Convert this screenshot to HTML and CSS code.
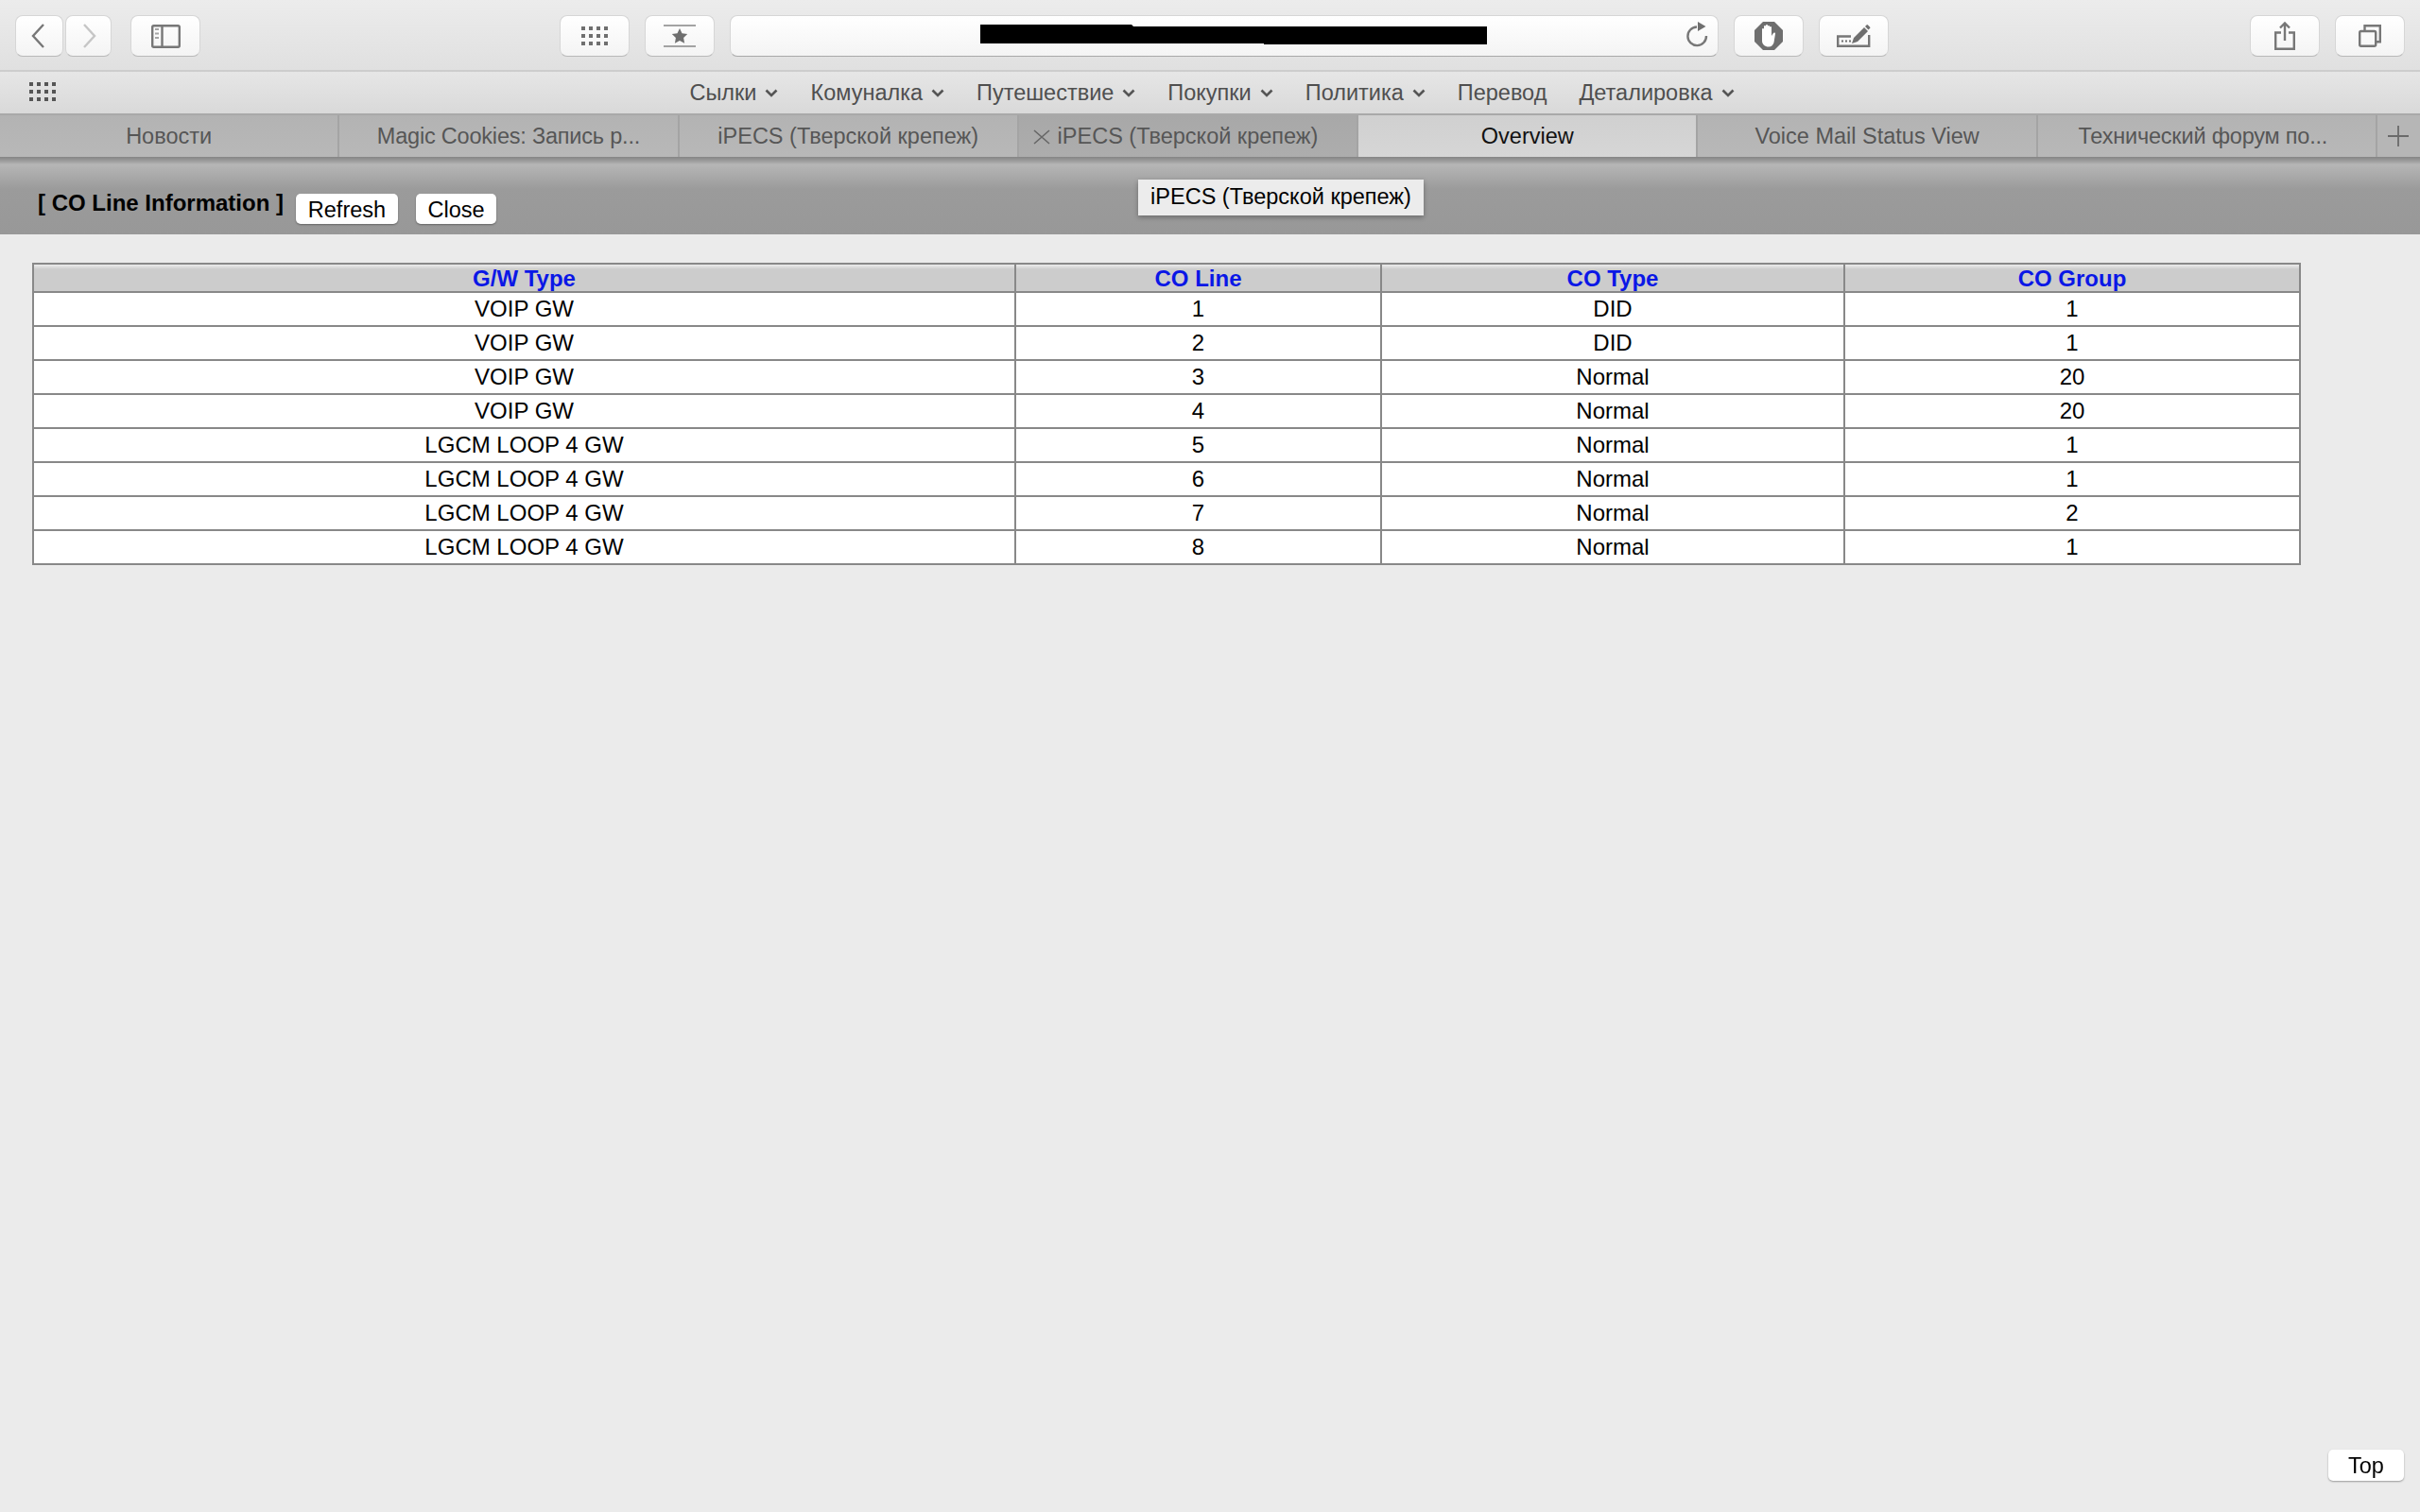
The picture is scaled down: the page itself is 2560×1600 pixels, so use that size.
FILE: index.html
```html
<!DOCTYPE html>
<html lang="ru">
<head>
<meta charset="utf-8">
<title>CO Line Information</title>
<link rel="stylesheet" href="styles.css">
</head>
<body>
<header class="toolbar">
  <button class="tb tb-back"><svg width="14" height="26" viewBox="0 0 14 26"><path class="ic" d="M13 1 2 13l11 12"/></svg></button>
  <button class="tb tb-fwd"><svg width="14" height="26" viewBox="0 0 14 26"><path class="ic-off" d="M1 1l11 12L1 25"/></svg></button>
  <button class="tb tb-wide tb-side"><svg width="31" height="25" viewBox="0 0 31 25"><rect class="ic" x="1.2" y="1.2" width="28.6" height="22.6" rx="1.5"/><path class="ic" d="M11.5 1v23"/><path class="ic-thin" d="M4 5h4M4 9.500h4M4 14h4"/></svg></button>
  <button class="tb tb-wide tb-grid"><svg width="28" height="20" viewBox="0 0 28 20"><path class="dots" d="M0 0h4v4H0zM8 0h4v4H8zM16 0h4v4h-4zM24 0h4v4h-4zM0 8h4v4H0zM8 8h4v4H8zM16 8h4v4h-4zM24 8h4v4h-4zM0 16h4v4H0zM8 16h4v4H8zM16 16h4v4h-4zM24 16h4v4h-4z"/></svg></button>
  <button class="tb tb-wide tb-star"><svg width="34" height="24" viewBox="0 0 34 24"><path class="ic-line" d="M0 1h34M0 23h34"/><path class="dots" d="M17 4l2.500 5.200 5.700.8-4.100 4 1 5.700-5.100-2.700-5.100 2.700 1-5.700-4.100-4 5.700-.8z"/></svg></button>
  <div class="address">
    <svg class="redact" width="536" height="22" viewBox="0 0 536 22"><path d="M0 0h160l2 2h374v19H300v-1H0z"/></svg>
    <svg class="reload" width="26" height="27" viewBox="0 0 26 27"><path class="ic" d="M12 5.500A9.800 9.800 0 1 0 22 15"/><path class="dots" d="M13 0l8.500 5L13 10z"/></svg>
  </div>
  <button class="tb tb-wide tb-hand"><svg width="30" height="30" viewBox="0 0 30 30"><path class="dots" d="M9 0h12l9 9v12l-9 9H9l-9-9V9z"/><path class="palm" d="M8 15V8a1 1 0 0 1 2 0V5a1 1 0 0 1 2 0V4a1 1 0 0 1 2 0v1a1 1 0 0 1 2 0v1a1 1 0 0 1 2 0V15l2-3c.8-1.200 2.500-.4 2 .8L20.500 22c-.8 2.500-2.500 4.500-5.500 4.500-4 0-7-2.500-7-6.500z"/></svg></button>
  <button class="tb tb-wide tb-pen"><svg width="36" height="24" viewBox="0 0 36 24"><path class="ic" d="M15 12.500H1.200v10.300h33V11"/><path class="dots" d="M5 16.500h2v2H5zM9 16.500h2v2H9zM13 16.500h2v2h-2zM16 20l2-6L29 3l4 4-11 11zM30 2l1.500-1.500a1 1 0 0 1 1.500 0l2 2a1 1 0 0 1 0 1.500L33.500 5.500z"/></svg></button>
  <button class="tb tb-wide tb-share"><svg width="22" height="30" viewBox="0 0 22 30"><path class="ic" d="M7 11.500H1.200v17.300h19.600V11.500H15M11 1.500V20M6 6.500l5-5 5 5"/></svg></button>
  <button class="tb tb-wide tb-tabs"><svg width="24" height="24" viewBox="0 0 24 24"><rect class="ic" x="1.200" y="7" width="17" height="15.800" rx="1.500"/><path class="ic" d="M6.500 6V1.200h16.300v17h-4"/></svg></button>
</header>

<nav class="bookmarks">
  <svg class="apps" width="28" height="20" viewBox="0 0 28 20"><path class="apps-dots" d="M0 0h4v4H0zM8 0h4v4H8zM16 0h4v4h-4zM24 0h4v4h-4zM0 8h4v4H0zM8 8h4v4H8zM16 8h4v4h-4zM24 8h4v4h-4zM0 16h4v4H0zM8 16h4v4H8zM16 16h4v4h-4zM24 16h4v4h-4z"/></svg>
  <span class="bm">Сылки<svg class="chev" width="14" height="9" viewBox="0 0 14 9"><path d="M1.500 1.500 7 7l5.500-5.500"/></svg></span>
  <span class="bm">Комуналка<svg class="chev" width="14" height="9" viewBox="0 0 14 9"><path d="M1.500 1.500 7 7l5.500-5.500"/></svg></span>
  <span class="bm">Путешествие<svg class="chev" width="14" height="9" viewBox="0 0 14 9"><path d="M1.500 1.500 7 7l5.500-5.500"/></svg></span>
  <span class="bm">Покупки<svg class="chev" width="14" height="9" viewBox="0 0 14 9"><path d="M1.500 1.500 7 7l5.500-5.500"/></svg></span>
  <span class="bm">Политика<svg class="chev" width="14" height="9" viewBox="0 0 14 9"><path d="M1.500 1.500 7 7l5.500-5.500"/></svg></span>
  <span class="bm">Перевод</span>
  <span class="bm">Деталировка<svg class="chev" width="14" height="9" viewBox="0 0 14 9"><path d="M1.500 1.500 7 7l5.500-5.500"/></svg></span>
</nav>

<div class="tabs">
  <div class="tab">Новости</div>
  <div class="tab tab-cut">Magic Cookies: Запись р...</div>
  <div class="tab">iPECS (Тверской крепеж)</div>
  <div class="tab tab-hover"><svg class="tab-x" width="18" height="16" viewBox="0 0 18 16"><path d="M1 1l16 14M17 1 1 15"/></svg>iPECS (Тверской крепеж)</div>
  <div class="tab tab-active">Overview</div>
  <div class="tab">Voice Mail Status View</div>
  <div class="tab tab-cut tab-forum">Технический форум по...</div>
  <div class="tab-add"><svg width="22" height="22" viewBox="0 0 22 22"><path d="M11 0v22M0 11h22"/></svg></div>
</div>

<section class="pagehead">
  <h1 class="pagetitle">[ CO Line Information ]</h1>
  <button class="btn btn-refresh">Refresh</button>
  <button class="btn btn-close">Close</button>
  <div class="tooltip">iPECS (Тверской крепеж)</div>
</section>

<main class="content">
  <table class="grid">
    <colgroup><col class="c1"><col class="c2"><col class="c3"><col class="c4"></colgroup>
    <thead><tr><th>G/W Type</th><th>CO Line</th><th>CO Type</th><th>CO Group</th></tr></thead>
    <tbody>
      <tr><td>VOIP GW</td><td>1</td><td>DID</td><td>1</td></tr>
      <tr><td>VOIP GW</td><td>2</td><td>DID</td><td>1</td></tr>
      <tr><td>VOIP GW</td><td>3</td><td>Normal</td><td>20</td></tr>
      <tr><td>VOIP GW</td><td>4</td><td>Normal</td><td>20</td></tr>
      <tr><td>LGCM LOOP 4 GW</td><td>5</td><td>Normal</td><td>1</td></tr>
      <tr><td>LGCM LOOP 4 GW</td><td>6</td><td>Normal</td><td>1</td></tr>
      <tr><td>LGCM LOOP 4 GW</td><td>7</td><td>Normal</td><td>2</td></tr>
      <tr><td>LGCM LOOP 4 GW</td><td>8</td><td>Normal</td><td>1</td></tr>
    </tbody>
  </table>
</main>

<button class="btn btn-top">Top</button>
</body>
</html>
```

FILE: styles.css
```css
* { box-sizing: border-box; }
html, body { margin: 0; height: 100%; }
body {
  background: #ebebeb;
  font-family: "Liberation Sans", Arial, sans-serif;
  overflow: hidden;
  color: #000;
}
svg { display: block; }

/* toolbar */
.toolbar {
  height: 76px;
  padding: 16px 16px 0;
  display: flex;
  align-items: flex-start;
  background: linear-gradient(#ececec, #e0e0e0);
  border-bottom: 2px solid #cdcdcd;
}
.tb, .address {
  height: 44px;
  border: 1px solid #d6d6d6;
  border-bottom-color: #b9b9b9;
  border-radius: 8px;
  background: linear-gradient(#ffffff, #f4f4f4);
  padding: 0;
  display: flex;
  align-items: center;
  justify-content: center;
  flex: none;
}
.tb-back { width: 51px; margin-right: 2px; padding-right: 4px; }
.tb-fwd { width: 49px; padding-left: 3px; }
.tb-wide { width: 74px; }
.tb-side { margin-left: 20px; }
.tb-grid { margin-left: 380px; }
.tb-star { margin-left: 16px; }
.tb-hand { margin-left: 16px; }
.tb-pen { margin-left: 16px; }
.tb-share { margin-left: 382px; }
.tb-tabs { margin-left: 16px; }
.address {
  width: 1046px;
  margin-left: 16px;
  justify-content: flex-start;
  padding-left: 264px;
  padding-right: 8px;
  border-bottom-color: #a9a9a9;
}
.redact { fill: #000; margin-top: -3px; }
.reload { margin-left: auto; margin-top: -4px; }
.ic, .ic-off, .ic-thin, .ic-line { fill: none; stroke: #777; stroke-width: 2.4; }
.ic-off { stroke: #c6c6c6; }
.ic-thin { stroke: #a5a5a5; stroke-width: 2; }
.ic-line { stroke: #a3a3a3; stroke-width: 2; }
.dots { fill: #6f6f6f; }
.palm { fill: #fff; }

/* bookmarks */
.bookmarks {
  height: 46px;
  display: flex;
  align-items: center;
  justify-content: center;
  gap: 34px;
  position: relative;
  background: linear-gradient(#e6e6e6, #d9d9d9);
  border-bottom: 2px solid #a9a9a9;
  color: #4f4f4f;
  font-size: 23.5px;
  padding-left: 4px;
}
.apps { position: absolute; left: 31px; top: 11px; }
.apps-dots { fill: #555; }
.bm { display: flex; align-items: center; gap: 9px; line-height: 44px; }
.chev { fill: none; stroke: #555; stroke-width: 2.6; }

/* tabs */
.tabs {
  height: 44px;
  display: grid;
  grid-template-columns: repeat(7, minmax(0, 1fr)) 45px;
  background: #b6b6b6;
  color: #565656;
  font-size: 23.5px;
}
.tab {
  position: relative;
  display: flex;
  align-items: center;
  justify-content: center;
  border-right: 2px solid #a4a4a4;
  background: linear-gradient(#b3b3b3, #b8b8b8);
  white-space: nowrap;
}
.tab-cut { letter-spacing: -.2px; }
.tab-forum { padding-right: 8px; }
.tab-hover { background: linear-gradient(#a8a8a8, #adadad); }
.tab-active {
  background: linear-gradient(#d0d0d0, #d6d6d6);
  color: #111;
  border-right-color: #a4a4a4;
}
.tab-x {
  position: absolute;
  left: 15px;
  top: 15px;
  fill: none;
  stroke: #666;
  stroke-width: 1.6;
}
.tab-add {
  display: flex;
  align-items: center;
  justify-content: center;
  fill: none;
  stroke: #6a6a6a;
  stroke-width: 1.8;
}

/* page header */
.pagehead {
  height: 82px;
  position: relative;
  display: flex;
  align-items: flex-start;
  padding: 39px 0 0 40px;
  background: linear-gradient(#858585 0, #a0a0a0 5px, #b6b6b6 8px, #9b9b9b 34px, #989898 100%);
}
.pagetitle {
  margin: -6px 0 0;
  font-size: 24px;
  line-height: 32px;
  font-weight: 700;
}
.btn {
  height: 32px;
  padding: 0;
  border: 0;
  border-radius: 5px;
  background: #fff;
  font: 23.5px/34px "Liberation Sans", Arial, sans-serif;
  color: #000;
  box-shadow: 0 1px 2px rgba(0,0,0,.35);
}
.btn-refresh { width: 108px; margin-left: 13px; }
.btn-close { width: 85px; margin-left: 19px; }
.tooltip {
  position: absolute;
  left: 1204px;
  top: 24px;
  width: 302px;
  height: 38px;
  background: #ececec;
  box-shadow: 0 2px 5px rgba(0,0,0,.3);
  color: #000;
  font-size: 23.5px;
  line-height: 36px;
  text-align: center;
}

/* table */
.content { padding: 30px 0 0 34px; }
.grid {
  border-collapse: collapse;
  table-layout: fixed;
  width: 2398px;
  border: 2px solid #888;
  background: #fff;
  font-size: 24px;
}
.c1 { width: 1039px; }
.c2 { width: 387px; }
.c3 { width: 490px; }
.c4 { width: 482px; }
.grid th, .grid td {
  border: 2px solid #888;
  padding: 0;
  text-align: center;
  vertical-align: top;
}
.grid th {
  height: 28px;
  line-height: 27px;
  padding-top: 1px;
  color: #0a17e6;
  background: linear-gradient(#ececec 0, #cccccc 5px, #cccccc 100%);
}
.grid td {
  height: 36px;
  line-height: 34px;
}

/* floating */
.btn-top {
  position: fixed;
  left: 2463px;
  top: 1534px;
  width: 80px;
  height: 33px;
}
```
